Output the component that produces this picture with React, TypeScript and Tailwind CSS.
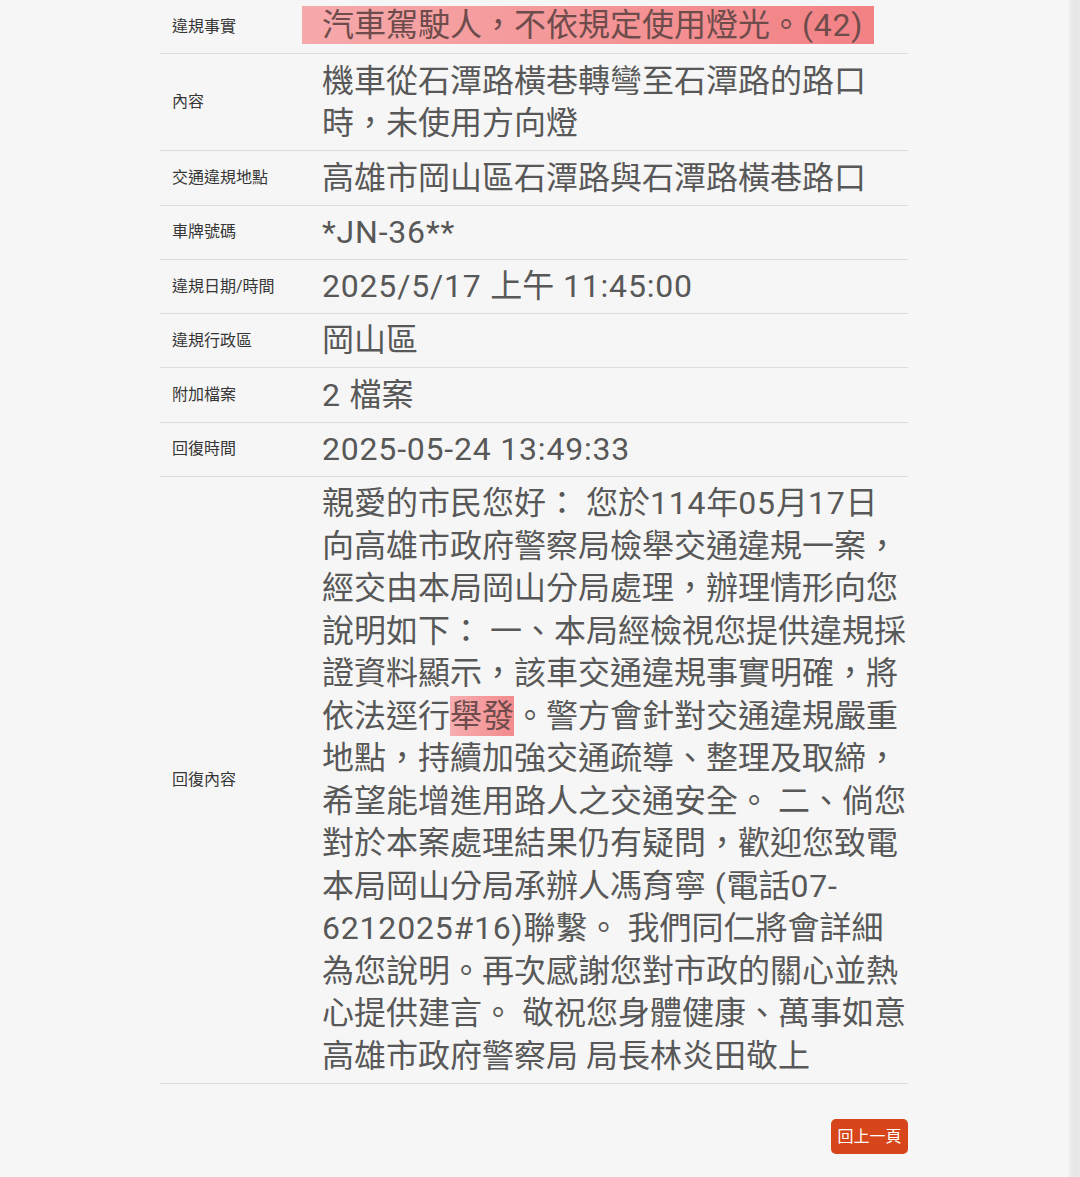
import React from "react";

function L({ children }: { children: React.ReactNode }) {
  return <span className="tracking-[0.8px]">{children}</span>;
}

const rows: { label: string; lines: React.ReactNode[] }[] = [
  {
    label: "內容",
    lines: ["機車從石潭路橫巷轉彎至石潭路的路口", "時，未使用方向燈"],
  },
  { label: "交通違規地點", lines: ["高雄市岡山區石潭路與石潭路橫巷路口"] },
  { label: "車牌號碼", lines: [<L>*JN-36**</L>] },
  {
    label: "違規日期/時間",
    lines: [
      <>
        <L>2025/5/17 </L>上午<L> 11:45:00</L>
      </>,
    ],
  },
  { label: "違規行政區", lines: ["岡山區"] },
  {
    label: "附加檔案",
    lines: [
      <>
        <L>2 </L>檔案
      </>,
    ],
  },
  { label: "回復時間", lines: [<L>2025-05-24 13:49:33</L>] },
];

const reply: React.ReactNode[] = [
  <>
    親愛的市民您好： 您於<L>114</L>年<L>05</L>月<L>17</L>日
  </>,
  "向高雄市政府警察局檢舉交通違規一案，",
  "經交由本局岡山分局處理，辦理情形向您",
  "說明如下： 一、本局經檢視您提供違規採",
  "證資料顯示，該車交通違規事實明確，將",
  <>
    依法逕行
    <span className="inline-block bg-linear-to-r from-[#f6aeb0] to-[#f28a8d] leading-[40px] text-[#6e4c4c]">
      舉發
    </span>
    。警方會針對交通違規嚴重
  </>,
  "地點，持續加強交通疏導、整理及取締，",
  "希望能增進用路人之交通安全。 二、倘您",
  "對於本案處理結果仍有疑問，歡迎您致電",
  <>
    本局岡山分局承辦人馮育寧<L> (</L>電話<L>07-</L>
  </>,
  <>
    <L>6212025#16)</L>聯繫。 我們同仁將會詳細
  </>,
  "為您說明。再次感謝您對市政的關心並熱",
  "心提供建言。 敬祝您身體健康、萬事如意",
  "高雄市政府警察局 局長林炎田敬上",
];

function Row({
  label,
  children,
  reply = false,
}: {
  label: string;
  children: React.ReactNode;
  reply?: boolean;
}) {
  return (
    <div className="flex border-b border-[#dddddd]">
      <div className="flex w-[150px] shrink-0 items-center pl-3 text-[16px] leading-[20px] text-[#363636]">
        {label}
      </div>
      <div
        className={
          reply
            ? "flex-1 py-[5.3px] pl-3 text-[32px] leading-[42.5px] text-[#585858]"
            : "flex-1 py-[5.3px] pl-3 text-[32px] leading-[42.7px] text-[#585858]"
        }
      >
        {children}
      </div>
    </div>
  );
}

export default function App() {
  return (
    <div className="flex h-[1177px] overflow-hidden bg-[#f6f6f6] font-[Roboto,'Noto_Sans_CJK_TC',sans-serif]">
      <div className="flex-1">
        <div className="ml-[160px] w-[748px]">
          <Row label="違規事實">
            <div className="flex h-[42.7px] items-center">
              <span className="-ml-5 -mt-[3px] inline-block bg-linear-to-r from-[#f6a9ab] to-[#f28184] pl-5 pr-[11px] leading-[38px] text-[#6e4c4c] whitespace-nowrap">
                汽車駕駛人，不依規定使用燈光。<L>(42)</L>
              </span>
            </div>
          </Row>
          {rows.map((r) => (
            <Row key={r.label} label={r.label}>
              {r.lines.map((l, i) => (
                <div key={i} className="whitespace-nowrap">
                  {l}
                </div>
              ))}
            </Row>
          ))}
          <Row label="回復內容" reply>
            {reply.map((l, i) => (
              <div key={i} className="whitespace-nowrap">
                {l}
              </div>
            ))}
          </Row>
          <div className="mt-[35px] flex justify-end">
            <button className="h-[35px] w-[77px] rounded-[5px] bg-[#d6461a] text-[16px] leading-[35px] text-white">
              回上一頁
            </button>
          </div>
        </div>
      </div>
      <div className="w-[11px] bg-linear-to-r from-[#efefef] via-[#e6e6e6] to-[#e8e8e8]" />
    </div>
  );
}
